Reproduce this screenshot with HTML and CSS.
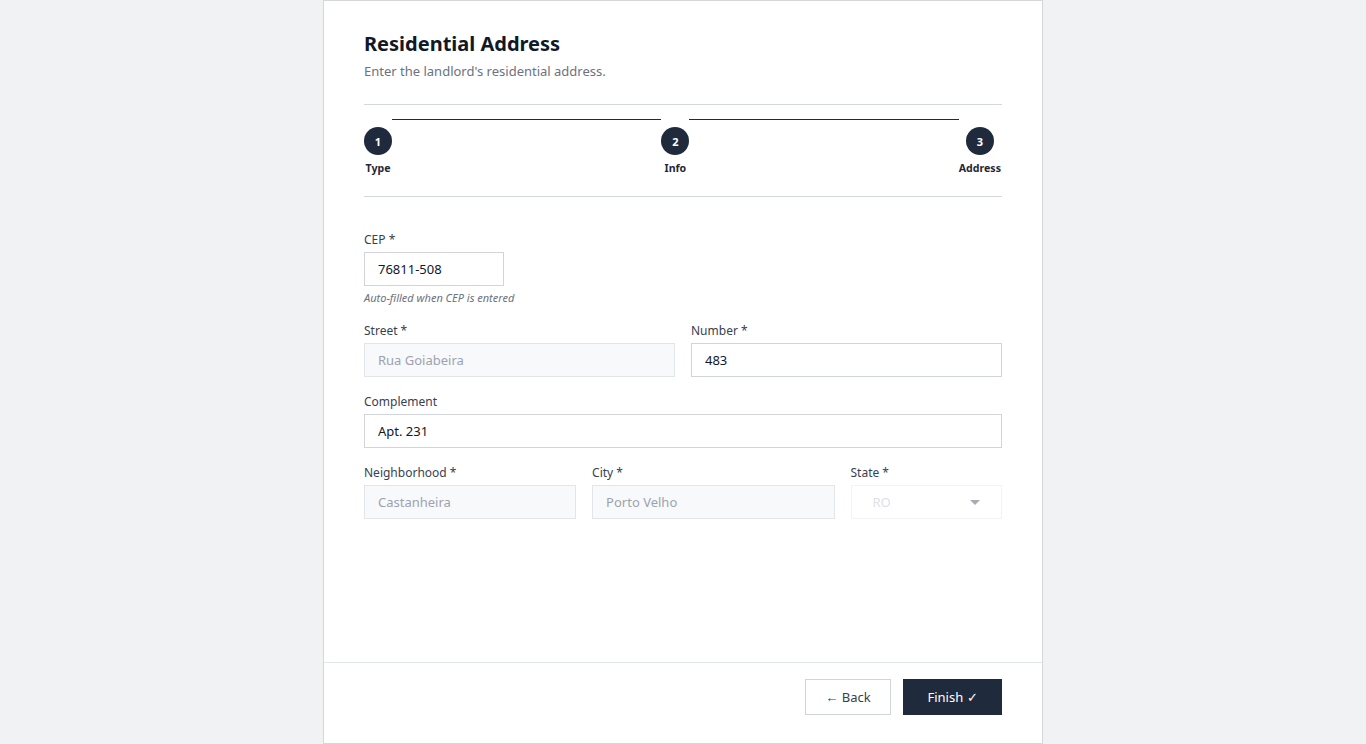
FILE: index.html
```html
<!DOCTYPE html>
<html lang="en">
<head>
    <meta charset="UTF-8">
    <meta name="viewport" content="width=device-width, initial-scale=1.0">
    <title>Landlord - Residential Address</title>
    <link rel="stylesheet" href="styles.css">
</head>
<body>
    <div class="card">
        <div class="card-body">
            <h1 class="title">Residential Address</h1>
            <p class="subtitle">Enter the landlord's residential address.</p>

            <div class="stepper">
                <div class="step">
                    <span class="step-num">1</span>
                    <span class="step-label">Type</span>
                </div>
                <div class="step-line"></div>
                <div class="step">
                    <span class="step-num">2</span>
                    <span class="step-label">Info</span>
                </div>
                <div class="step-line"></div>
                <div class="step">
                    <span class="step-num">3</span>
                    <span class="step-label">Address</span>
                </div>
            </div>

            <form class="form">
                <div class="field">
                    <label>CEP *</label>
                    <input class="input input-cep" type="text" value="76811-508">
                    <span class="hint">Auto-filled when CEP is entered</span>
                </div>

                <div class="row row-2">
                    <div class="field">
                        <label>Street *</label>
                        <input class="input" type="text" value="Rua Goiabeira" disabled>
                    </div>
                    <div class="field">
                        <label>Number *</label>
                        <input class="input" type="text" value="483">
                    </div>
                </div>

                <div class="field">
                    <label>Complement</label>
                    <input class="input" type="text" value="Apt. 231">
                </div>

                <div class="row row-3">
                    <div class="field">
                        <label>Neighborhood *</label>
                        <input class="input" type="text" value="Castanheira" disabled>
                    </div>
                    <div class="field">
                        <label>City *</label>
                        <input class="input" type="text" value="Porto Velho" disabled>
                    </div>
                    <div class="field">
                        <label>State *</label>
                        <div class="select-wrap">
                            <select class="input select" disabled>
                                <option>RO</option>
                            </select>
                            <span class="caret"></span>
                        </div>
                    </div>
                </div>
            </form>
        </div>

        <div class="card-footer">
            <button class="btn btn-back" type="button">&larr; Back</button>
            <button class="btn btn-finish" type="button">Finish &#10003;</button>
        </div>
    </div>
</body>
</html>
```

FILE: styles.css
```css
* {
    margin: 0;
    padding: 0;
    box-sizing: border-box;
}
body {
    font-family: "Noto Sans", "Open Sans", Arial, sans-serif;
    background: #f1f2f4;
    color: #111827;
}
.card {
    width: 720px;
    height: 100vh;
    margin: 0 auto;
    background: #fff;
    border: 1px solid #d4d7dc;
    display: flex;
    flex-direction: column;
}
.card-body {
    flex: 1;
    padding: 29px 40px 0;
}
.title {
    font-size: 20px;
    line-height: 28px;
    font-weight: 700;
    color: #111827;
}
.subtitle {
    margin-top: 4px;
    font-size: 13px;
    line-height: 18px;
    color: #6b7280;
}

/* stepper */
.stepper {
    display: flex;
    align-items: flex-start;
    margin-top: 24px;
    padding: 22px 1px 21px 0;
    border-top: 1px solid #d4d7dc;
    border-bottom: 1px solid #d4d7dc;
}
.step {
    display: flex;
    flex-direction: column;
    align-items: center;
    gap: 6px;
}
.step-num {
    width: 28px;
    height: 28px;
    border-radius: 50%;
    background: #1f2a3c;
    color: #fff;
    font-size: 11px;
    font-weight: 700;
    display: flex;
    align-items: center;
    justify-content: center;
}
.step-label {
    font-size: 10.6px;
    line-height: 14px;
    font-weight: 700;
    color: #1f2937;
}
.step-line {
    flex: 1;
    height: 1px;
    margin-top: -8px;
    background: #1f2a3c;
}

/* form */
.form {
    margin-top: 34px;
    display: flex;
    flex-direction: column;
    gap: 16px;
}
.row {
    display: grid;
    gap: 16px;
}
.row-2 {
    grid-template-columns: 1fr 1fr;
}
.row-3 {
    grid-template-columns: 1.4fr 1.6fr 1fr;
}
.field {
    display: flex;
    flex-direction: column;
}
.field label {
    font-size: 12px;
    line-height: 17px;
    color: #374151;
    margin-bottom: 4px;
}
.input {
    height: 34px;
    width: 100%;
    padding: 0 13px;
    border: 1px solid #d1d5db;
    background: #fff;
    font-family: inherit;
    font-size: 13px;
    color: #111827;
    outline: none;
    border-radius: 0;
}
.input:disabled {
    background: #f8f9fb;
    border-color: #e2e5e9;
    color: #9ca3af;
}
.input-cep {
    width: 140px;
}
.hint {
    margin-top: 4px;
    font-size: 11px;
    line-height: 16px;
    font-style: italic;
    color: #6b7280;
}
.select-wrap {
    position: relative;
}
.select {
    appearance: none;
    -webkit-appearance: none;
    padding: 0 21px;
}
.select:disabled {
    background: #fff;
    border-color: #eceef1;
    color: #d1d5db;
}
.caret {
    position: absolute;
    right: 22px;
    top: 15px;
    border-left: 5px solid transparent;
    border-right: 5px solid transparent;
    border-top: 5px solid #a8adb5;
}

/* footer */
.card-footer {
    display: flex;
    justify-content: flex-end;
    gap: 12px;
    padding: 16px 40px 28px;
    border-top: 1px solid #e2e5e9;
}
.btn {
    height: 36px;
    font-family: inherit;
    font-size: 13px;
    cursor: pointer;
    border-radius: 0;
}
.btn-back {
    width: 86px;
    background: #fff;
    border: 1px solid #d1d5db;
    color: #374151;
}
.btn-finish {
    width: 99px;
    background: #1f2a3c;
    border: 1px solid #1f2a3c;
    color: #fff;
}
```
